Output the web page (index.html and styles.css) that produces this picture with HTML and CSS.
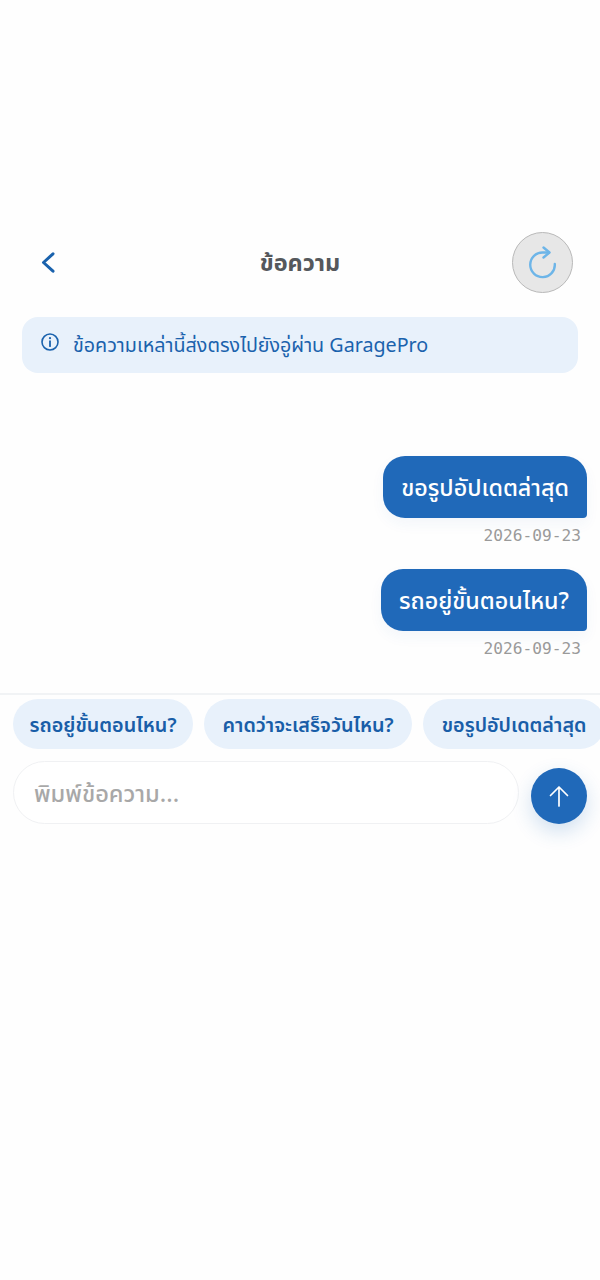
FILE: index.html
```html
<!DOCTYPE html>
<html lang="th">
<head>
<meta charset="utf-8">
<title>ข้อความ</title>
<link rel="stylesheet" href="styles.css">
</head>
<body>
<main class="app">
  <header class="header">
    <button class="back" aria-label="กลับ">
      <svg width="18" height="26" viewBox="0 0 18 26" fill="none"><path d="M14 3.800 4.500 12.500 14 21.200" stroke="#1a62ad" stroke-width="3" stroke-linecap="round" stroke-linejoin="round"/></svg>
    </button>
    <h1 class="title">ข้อความ</h1>
    <button class="refresh" aria-label="รีเฟรช">
      <svg width="40" height="40" viewBox="0 0 40 40" fill="none"><path d="M31.800 21A12.300 12.300 0 1 1 20 9.500H26" stroke="#6db5e8" stroke-width="2.400" stroke-linecap="round"/><path d="M20.500 4.500 26.500 9.500 20.500 14.500" stroke="#6db5e8" stroke-width="2.400" stroke-linecap="round" stroke-linejoin="round"/></svg>
    </button>
  </header>
  <div class="notice">
    <svg class="notice-icon" width="20" height="20" viewBox="0 0 20 20" fill="none"><circle cx="10" cy="10" r="8" stroke="#1a62ad" stroke-width="1.600"/><path d="M10 9.200v5" stroke="#1a62ad" stroke-width="1.800" stroke-linecap="round"/><circle cx="10" cy="6.200" r="1.100" fill="#1a62ad"/></svg>
    <span class="notice-text">ข้อความเหล่านี้ส่งตรงไปยังอู่ผ่าน GaragePro</span>
  </div>
  <section class="messages">
    <div class="message">
      <div class="bubble">ขอรูปอัปเดตล่าสุด</div>
      <time class="stamp">2026-09-23</time>
    </div>
    <div class="message">
      <div class="bubble">รถอยู่ขั้นตอนไหน?</div>
      <time class="stamp">2026-09-23</time>
    </div>
  </section>
  <footer class="composer">
    <div class="chips">
      <button class="chip">รถอยู่ขั้นตอนไหน?</button>
      <button class="chip chip-wide">คาดว่าจะเสร็จวันไหน?</button>
      <button class="chip chip-wide">ขอรูปอัปเดตล่าสุด</button>
    </div>
    <div class="entry">
      <div class="field"><span class="hint">พิมพ์ข้อความ...</span></div>
      <button class="send" aria-label="ส่ง">
        <svg width="24" height="24" viewBox="0 0 24 24" fill="none"><path d="M12 22V3M3.500 11.500 12 3l8.500 8.500" stroke="#fff" stroke-width="1.700" stroke-linecap="round" stroke-linejoin="round"/></svg>
      </button>
    </div>
  </footer>
</main>
</body>
</html>
```
FILE: styles.css
```css
* { box-sizing: border-box; }
html, body { margin: 0; height: 100%; }
body {
  background: #fff;
  font-family: "Noto Sans Thai", "Noto Sans Thai Looped", Kanit, Prompt, "Noto Sans", "DejaVu Sans", sans-serif;
}
button { font: inherit; border: 0; padding: 0; background: none; }
.app {
  min-height: 1280px;
  padding-top: 232px;
  background: #fefefe;
  overflow: hidden;
}
.header {
  height: 61px;
  display: flex;
  align-items: center;
  justify-content: space-between;
  padding: 0 27px 0 39px;
  position: relative;
}
.back { width: 18px; height: 26px; display: flex; }
.title {
  position: absolute;
  left: 0;
  right: 0;
  top: 2px;
  margin: 0;
  text-align: center;
  font-size: 23.500px;
  font-weight: 700;
  color: #55585c;
  line-height: 61px;
}
.refresh {
  width: 61px;
  height: 61px;
  border-radius: 50%;
  background: #e7e7e7;
  border: 1px solid #b9b9b9;
  display: flex;
  align-items: center;
  justify-content: center;
}
.notice {
  margin: 24px 22px 0;
  height: 56px;
  border-radius: 16px;
  background: #e8f1fb;
  display: flex;
  gap: 13px;
  padding: 2px 18px 0;
  align-items: center;
  color: #1a62ad;
  font-size: 19.700px;
}
.notice-icon { flex: none; margin-top: -9px; }
.messages {
  height: 320px;
  padding: 83px 13px 0;
  display: flex;
  flex-direction: column;
  gap: 24px;
  align-items: flex-end;
}
.message { display: flex; flex-direction: column; align-items: flex-end; }
.bubble {
  height: 62px;
  padding: 2px 18px 0;
  display: flex;
  align-items: center;
  background: #2069b9;
  color: #fff;
  font-size: 23.300px;
  font-weight: 500;
  border-radius: 22px 22px 4px 22px;
  box-shadow: 0 6px 14px rgba(32, 105, 185, .05);
}
.stamp {
  margin: 9px 6px 0 0;
  height: 18px;
  line-height: 18px;
  font-family: "DejaVu Sans Mono", "Liberation Mono", monospace;
  font-size: 16.200px;
  color: #9a9a9a;
}
.composer { border-top: 2px solid #f1f3f5; padding: 4px 13px 0; }
.chips { display: flex; gap: 11px; width: 640px; }
.chip {
  flex: none;
  height: 50px;
  padding: 3px 16.500px 0;
  border-radius: 25px;
  background: #e8f1fb;
  color: #195ea8;
  font-size: 19.800px;
  font-weight: 600;
  white-space: nowrap;
}
.chip-wide { padding: 3px 18.500px 0; }
.entry { display: flex; align-items: flex-end; gap: 12px; margin-top: 12px; }
.field {
  width: 506px;
  height: 63px;
  border: 1px solid #f0f1f3;
  border-radius: 31.500px;
  background: #fff;
  display: flex;
  align-items: center;
  padding: 4px 20px 0;
  color: #a8a8a8;
  font-size: 23.600px;
  font-weight: 500;
}
.send {
  width: 56px;
  height: 56px;
  flex: none;
  border-radius: 50%;
  background: #2069b9;
  display: flex;
  align-items: center;
  justify-content: center;
  box-shadow: 0 8px 20px rgba(32, 105, 185, .2);
}
```
